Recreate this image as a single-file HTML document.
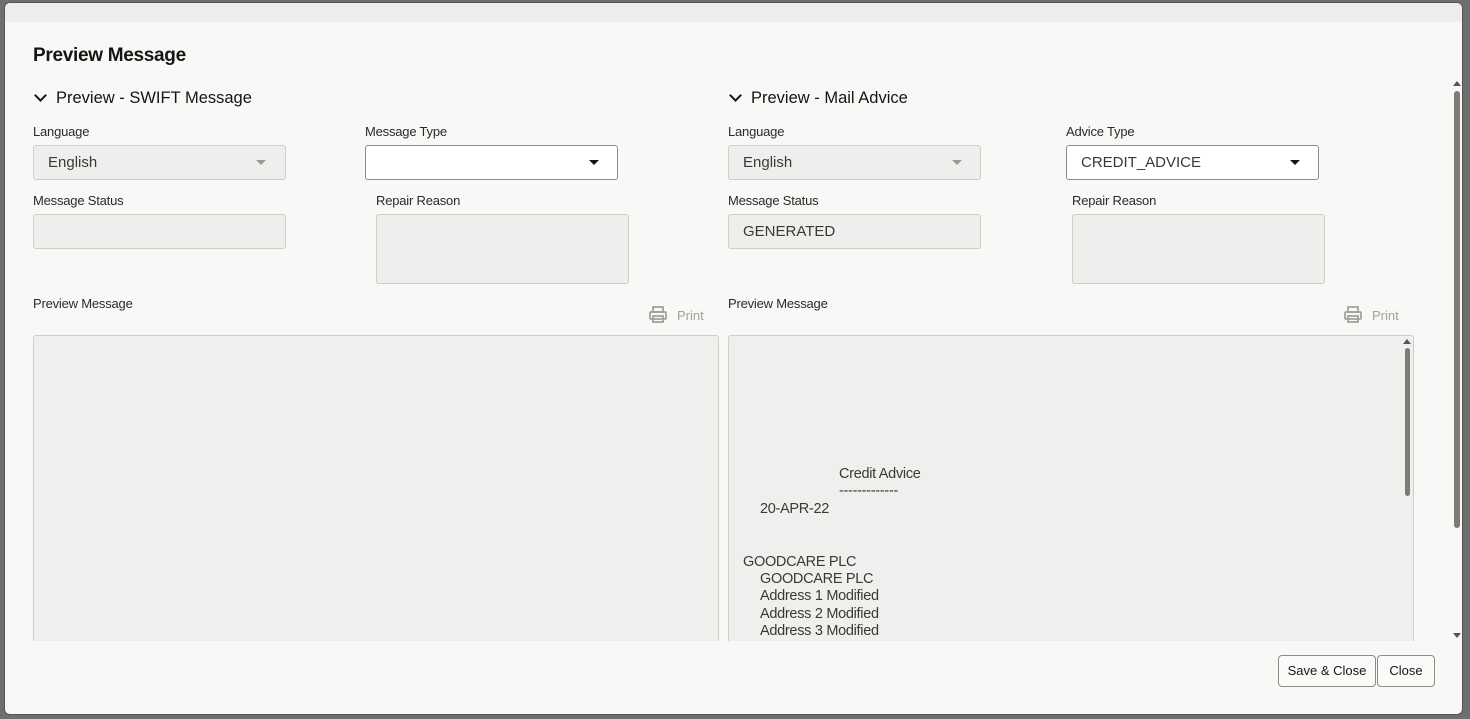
<!DOCTYPE html>
<html><head><meta charset="utf-8"><style>
*{box-sizing:border-box;margin:0;padding:0}
body{width:1470px;height:719px;background:#6e6e6e;font-family:"Liberation Sans",sans-serif;position:relative;overflow:hidden;color:#161513}
.dlg{position:absolute;left:4px;top:2px;width:1459px;height:713px;background:#f9f8f6;border-radius:6px;border:1px solid #555;overflow:hidden}
.strip{position:absolute;left:0;top:0;width:100%;height:19px;background:#efeeec}
.a{position:absolute}
.h1{font-size:19px;font-weight:bold;letter-spacing:-0.3px}
.h2{font-size:16.5px}
.lbl{font-size:13px;color:#2b2a28;letter-spacing:-0.2px}
.in{position:absolute;border:1px solid #cfcdc9;background:#efeeec;border-radius:3px;font-size:15px;color:#3a3936;padding-left:14px;line-height:34px}
.sel{background:#fff;border:1px solid #8e8c88}
.tri{position:absolute;width:0;height:0;border-left:5px solid transparent;border-right:5px solid transparent;border-top:5px solid #161513}
.ltri{border-top-color:#9a9894}
.chev{position:absolute;width:9px;height:9px;border-right:2px solid #161513;border-bottom:2px solid #161513;transform:rotate(45deg)}
.print{position:absolute;font-size:13px;color:#a3a19d}
.box{position:absolute;background:#f0efed;border:1px solid #cfcdc9;border-bottom:none;border-radius:3px 3px 0 0}
.mt{position:absolute;font-size:14.5px;color:#3a3936;white-space:pre;letter-spacing:-0.3px}
.btn{position:absolute;border:1px solid #8e8c88;border-radius:4px;background:#fbfaf9;font-size:13px;text-align:center;line-height:30px;color:#161513}
</style></head><body>
<div class="dlg">
<div class="strip"></div>
<div class="a h1" style="left:28px;top:42px">Preview Message</div>

<div class="chev" style="left:31px;top:88px"></div>
<div class="a h2" style="left:51px;top:86px">Preview - SWIFT Message</div>
<div class="chev" style="left:726px;top:88px"></div>
<div class="a h2" style="left:746px;top:86px">Preview - Mail Advice</div>

<div class="a lbl" style="left:28px;top:121px">Language</div>
<div class="in" style="left:28px;top:142px;width:253px;height:35px">English</div>
<div class="tri ltri" style="left:251px;top:157px"></div>
<div class="a lbl" style="left:360px;top:121px">Message Type</div>
<div class="in sel" style="left:360px;top:142px;width:253px;height:35px"></div>
<div class="tri" style="left:584px;top:157px"></div>

<div class="a lbl" style="left:28px;top:190px">Message Status</div>
<div class="in" style="left:28px;top:211px;width:253px;height:35px"></div>
<div class="a lbl" style="left:371px;top:190px">Repair Reason</div>
<div class="in" style="left:371px;top:211px;width:253px;height:70px"></div>

<div class="a lbl" style="left:723px;top:121px">Language</div>
<div class="in" style="left:723px;top:142px;width:253px;height:35px">English</div>
<div class="tri ltri" style="left:947px;top:157px"></div>
<div class="a lbl" style="left:1061px;top:121px">Advice Type</div>
<div class="in sel" style="left:1061px;top:142px;width:253px;height:35px">CREDIT_ADVICE</div>
<div class="tri" style="left:1285px;top:157px"></div>

<div class="a lbl" style="left:723px;top:190px">Message Status</div>
<div class="in" style="left:723px;top:211px;width:253px;height:35px">GENERATED</div>
<div class="a lbl" style="left:1067px;top:190px">Repair Reason</div>
<div class="in" style="left:1067px;top:211px;width:253px;height:70px"></div>

<div class="a lbl" style="left:28px;top:293px">Preview Message</div>
<div class="a lbl" style="left:723px;top:293px">Preview Message</div>

<svg class="a" style="left:643px;top:302px" width="20" height="20" viewBox="0 0 20 20" fill="none" stroke="#a3a19d" stroke-width="1.8"><rect x="5" y="2" width="10" height="5"/><rect x="2" y="7" width="16" height="7" rx="1"/><rect x="5" y="11" width="10" height="6"/></svg>
<div class="print" style="left:672px;top:305px">Print</div>
<svg class="a" style="left:1338px;top:302px" width="20" height="20" viewBox="0 0 20 20" fill="none" stroke="#a3a19d" stroke-width="1.8"><rect x="5" y="2" width="10" height="5"/><rect x="2" y="7" width="16" height="7" rx="1"/><rect x="5" y="11" width="10" height="6"/></svg>
<div class="print" style="left:1367px;top:305px">Print</div>

<div class="box" style="left:28px;top:332px;width:686px;height:306px"></div>
<div class="box" style="left:723px;top:332px;width:686px;height:306px"></div>
<div class="a" style="left:1400px;top:345px;width:5px;height:148px;background:#7d7b78;border-radius:3px"></div>
<div class="tri" style="left:1398px;top:336px;border-left-width:4px;border-right-width:4px;border-top:none;border-bottom:5px solid #555"></div>

<div class="mt" style="left:834px;top:463px">Credit Advice</div>
<div class="mt" style="left:834px;top:480px">-------------</div>
<div class="mt" style="left:755px;top:498px">20-APR-22</div>
<div class="mt" style="left:738px;top:551px">GOODCARE PLC</div>
<div class="mt" style="left:755px;top:568px">GOODCARE PLC</div>
<div class="mt" style="left:755px;top:585px">Address 1 Modified</div>
<div class="mt" style="left:755px;top:603px">Address 2 Modified</div>
<div class="mt" style="left:755px;top:620px">Address 3 Modified</div>
<div class="a" style="left:0;top:638px;width:1440px;height:75px;background:#f9f8f6"></div>

<div class="a" style="left:1449px;top:88px;width:6px;height:437px;background:#7d7b78;border-radius:3px"></div>
<div class="tri" style="left:1448px;top:78px;border-left-width:4px;border-right-width:4px;border-top:none;border-bottom:5px solid #555"></div>
<div class="tri" style="left:1448px;top:630px;border-left-width:4px;border-right-width:4px;border-top:5px solid #555"></div>

<div class="btn" style="left:1273px;top:652px;width:98px;height:32px">Save &amp; Close</div>
<div class="btn" style="left:1372px;top:652px;width:58px;height:32px">Close</div>
</div>
</body></html>
